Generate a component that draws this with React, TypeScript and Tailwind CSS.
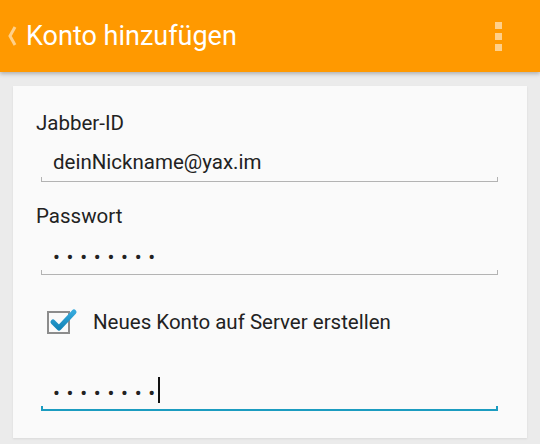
import React from "react";

function Field({ children, active, className }: { children: React.ReactNode; active?: boolean; className?: string }) {
  return (
    <div className={"ml-[28px] mr-[29px] flex flex-col " + (className ?? "")}>
      <div className="h-[42px] flex items-end pl-[12px] pb-[3px]">{children}</div>
      <div
        className={
          active
            ? "h-[5px] border-x-2 border-b-2 border-[#1b9cc0]"
            : "h-[5px] border-x border-b border-[#b3b3b3]"
        }
      />
    </div>
  );
}

function Dots() {
  return <span className="text-[20.5px] leading-[24px] tracking-[6.7px] text-[#222] translate-y-[2px]">••••••••</span>;
}

export default function App() {
  return (
    <div className="w-[540px] h-[444px] bg-[#ebebeb] overflow-hidden" style={{ fontFamily: "Roboto, 'Noto Sans', sans-serif" }}>
      <div className="relative h-[72px] bg-[#ff9900] flex items-center shadow-[0_2px_4px_rgba(0,0,0,0.25)]">
        <svg width="20" height="24" viewBox="0 0 20 24" className="ml-[4px]">
          <polyline points="11,3 6,12 11,21" fill="none" stroke="#ffd08a" strokeWidth="3" />
        </svg>
        <span className="ml-[2px] text-[27px] text-white leading-none">Konto hinzufügen</span>
        <div className="ml-auto mr-[38px] flex flex-col gap-[4px]">
          <div className="w-[7px] h-[7px] bg-[#ffd08a]" />
          <div className="w-[7px] h-[7px] bg-[#ffd08a]" />
          <div className="w-[7px] h-[7px] bg-[#ffd08a]" />
        </div>
      </div>
      <div className="px-[13px] pt-[14px]">
        <div className="bg-[#fafafa] shadow-[0_1px_2px_rgba(0,0,0,0.08)] pt-[25px] pb-[27px] flex flex-col">
          <div className="pl-[23px] text-[20.5px] leading-[24px] text-[#222]">Jabber-ID</div>
          <Field>
            <span className="text-[20.5px] leading-[24px] text-[#222]">deinNickname@yax.im</span>
          </Field>
          <div className="mt-[22px] pl-[23px] text-[20.5px] leading-[24px] text-[#222]">Passwort</div>
          <Field>
            <Dots />
          </Field>
          <div className="mt-[35px] ml-[34px] flex items-center h-[24px]">
            <div className="relative w-[23px] h-[23px] border-2 border-[#8c8c8c]">
              <svg width="30" height="28" viewBox="0 0 30 28" className="absolute left-[-1px] top-[-8px]">
                <defs>
                  <linearGradient id="chk" x1="0" y1="0" x2="0" y2="1">
                    <stop offset="0" stopColor="#35a9dc" />
                    <stop offset="1" stopColor="#1485b8" />
                  </linearGradient>
                </defs>
                <path d="M5 17 L11 23 L26 7" fill="none" stroke="url(#chk)" strokeWidth="5" strokeLinecap="round" strokeLinejoin="round" />
              </svg>
            </div>
            <span className="ml-[23px] text-[20.5px] leading-[24px] text-[#222]">Neues Konto auf Server erstellen</span>
          </div>
          <Field active className="mt-[30px]">
            <Dots />
            <span className="ml-[-4px] inline-block w-[2px] h-[26px] bg-[#111]" />
          </Field>
        </div>
      </div>
    </div>
  );
}
